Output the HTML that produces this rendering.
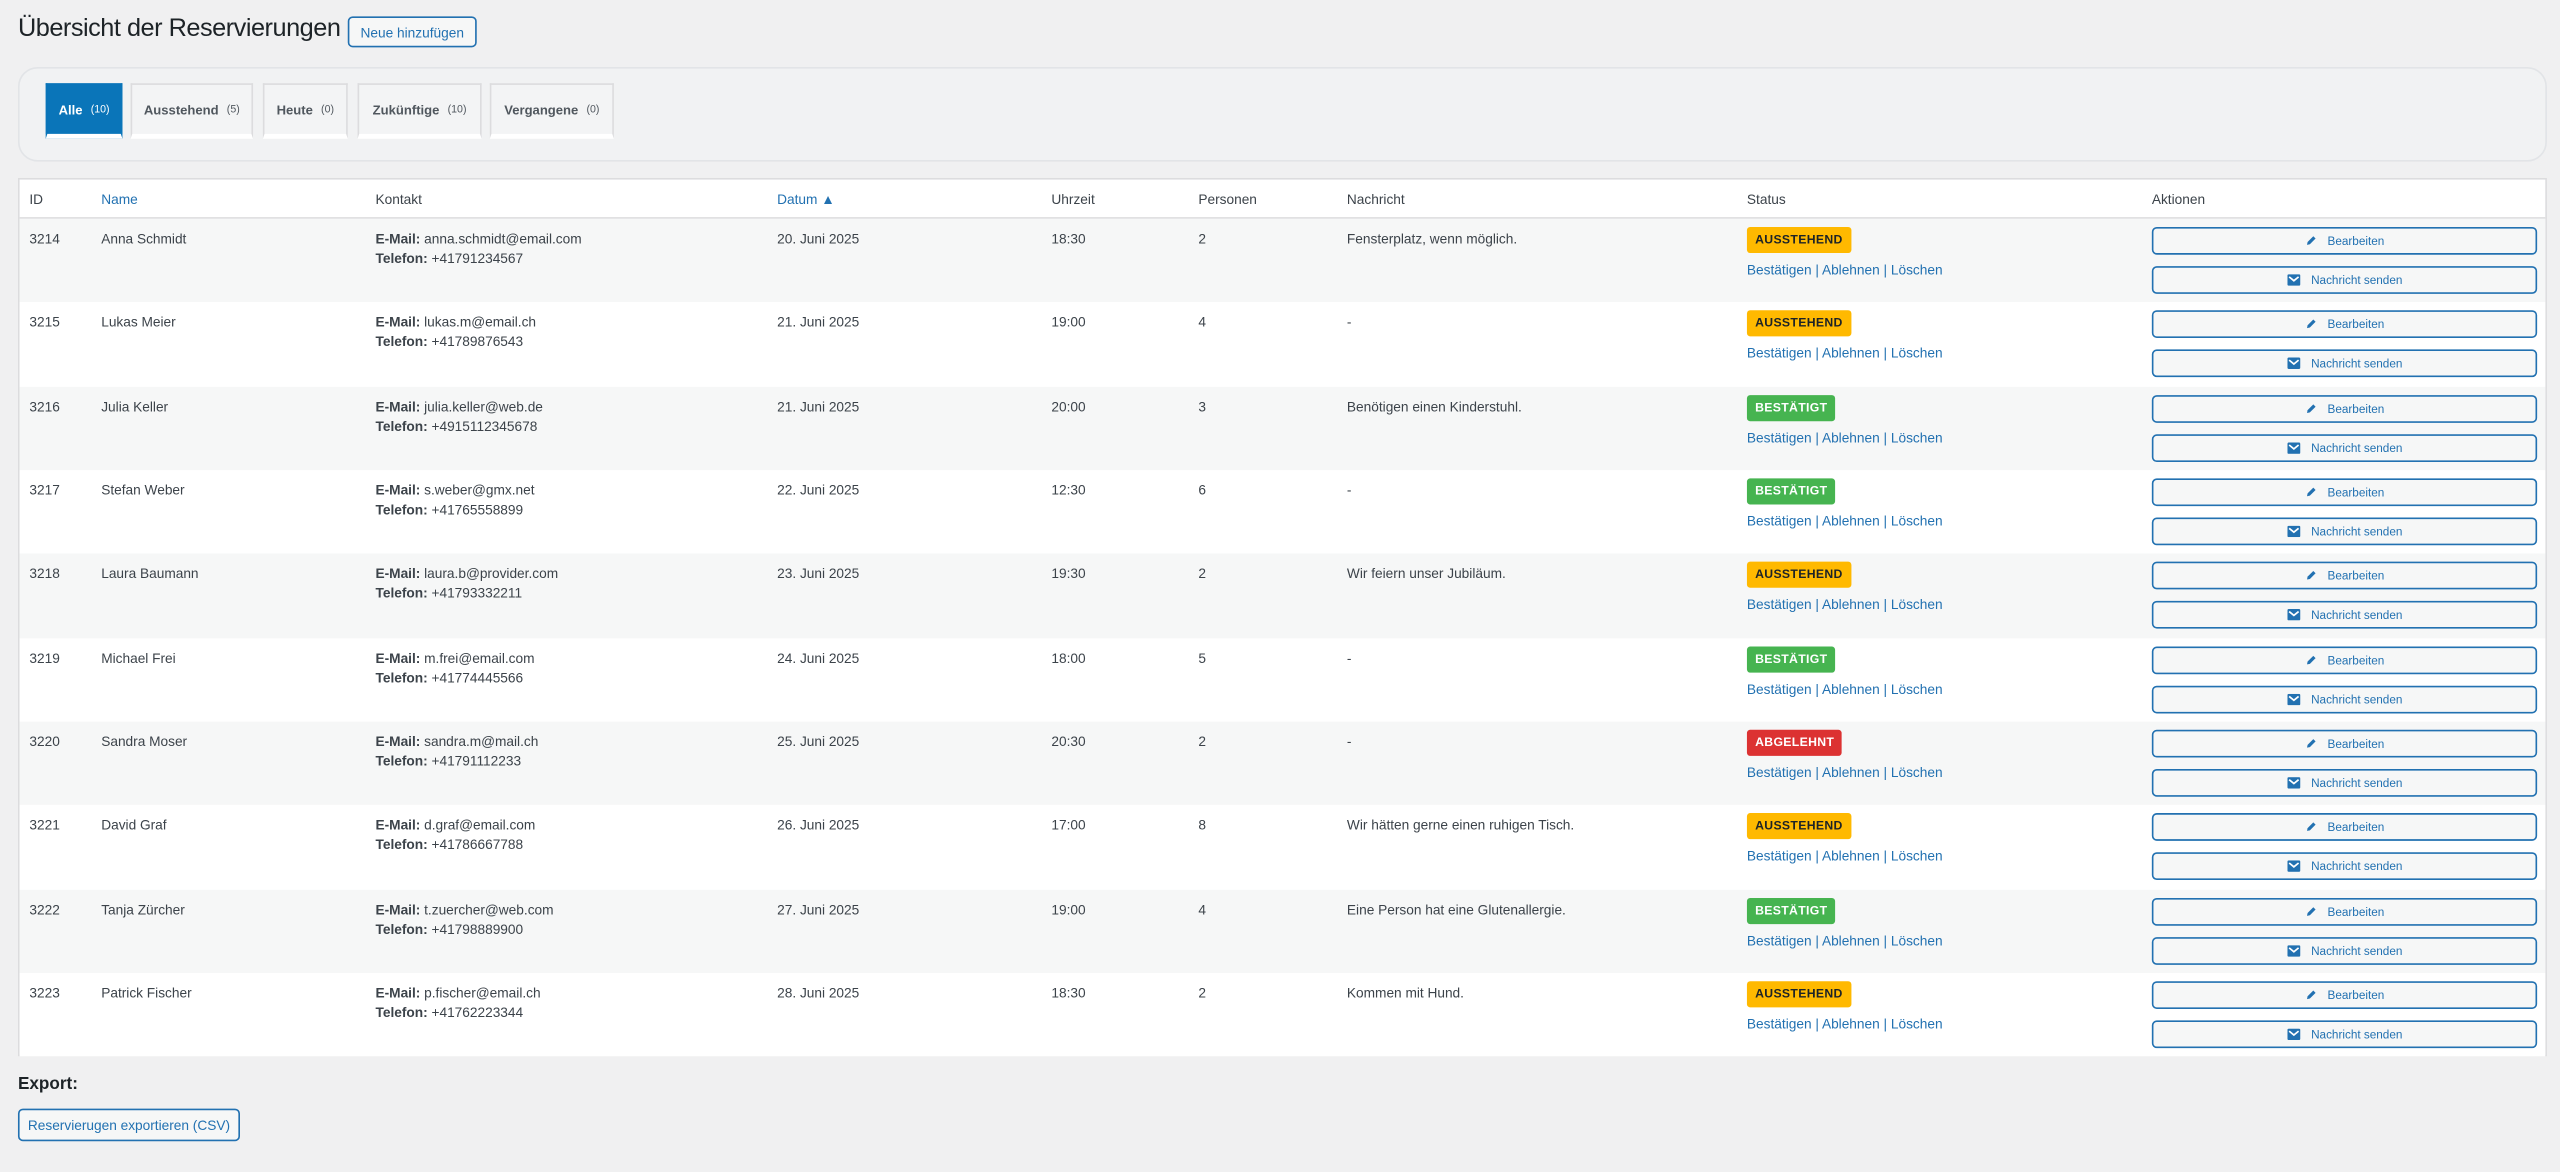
<!DOCTYPE html>
<html><head><meta charset="utf-8"><style>
html,body{margin:0;padding:0;background:#f0f0f1;overflow:hidden}
body{width:2560px;height:1172px}
#w{position:absolute;left:0;top:0;width:1568px;height:718px;transform:scale(1.63265);transform-origin:0 0;font-family:"Liberation Sans",sans-serif;color:#3c434a;font-size:8.4px}
.a{position:absolute;white-space:nowrap}
h1{position:absolute;left:11px;top:9px;margin:0;font-weight:400;font-size:15.5px;color:#1d2327;letter-spacing:-0.3px;white-space:nowrap}
.btn{position:absolute;border:1px solid #2271b1;border-radius:3px;color:#2271b1;background:#f6f7f7;font-size:8.4px;box-sizing:border-box;display:flex;align-items:center;justify-content:center;white-space:nowrap}
.panel{position:absolute;left:11px;top:41px;width:1549px;height:58px;border:1px solid #e2e4e7;border-radius:12px;box-sizing:border-box;background:#f1f2f3}
.tab{position:absolute;top:51px;height:34px;box-sizing:border-box;border:1px solid #dcdcde;border-bottom:3px solid #fff;background:#f3f4f5;font-weight:bold;font-size:8px;color:#50575e;display:flex;align-items:center;justify-content:center}
.tab small{font-weight:normal;font-size:6.5px;margin-left:5px}
.tab.on{background:#0a75b9;color:#fff;border-color:#0a75b9;border-bottom:3px solid #fff}
.tbl{position:absolute;left:11px;top:109px;width:1549px;height:538px;border:1px solid #dcdcde;box-sizing:border-box;background:#fff}
.row{position:absolute;left:12px;width:1547px;height:51.3px}
.badge{position:absolute;height:16px;line-height:16px;padding:0 5px;border-radius:2px;font-weight:bold;font-size:7.5px;letter-spacing:0.2px}
.ya{background:#ffb900;color:#1d2327}.gr{background:#46b450;color:#fff}.rd{background:#dc3232;color:#fff}
.lk{color:#2271b1}
.ab{position:absolute;left:1306px;width:236px;height:17px;border:1px solid #2271b1;border-radius:3px;box-sizing:border-box;background:#f6f7f7;color:#2271b1;font-size:7.2px;display:flex;align-items:center;justify-content:center;gap:7px}
</style></head><body><div id="w">
<h1>Übersicht der Reservierungen</h1>
<div class="btn" style="left:213px;top:10px;width:79px;height:19px">Neue hinzufügen</div>
<div class="panel"></div>
<div class="tab on" style="left:28px;width:47px">Alle<small>(10)</small></div>
<div class="tab" style="left:80px;width:75px">Ausstehend<small>(5)</small></div>
<div class="tab" style="left:161px;width:52px">Heute<small>(0)</small></div>
<div class="tab" style="left:219px;width:76px">Zukünftige<small>(10)</small></div>
<div class="tab" style="left:300px;width:76px">Vergangene<small>(0)</small></div>
<div class="tbl"></div>
<div class="a" style="top:117px;left:18px">ID</div>
<div class="a lk" style="top:117px;left:62px">Name</div>
<div class="a" style="top:117px;left:230px">Kontakt</div>
<div class="a lk" style="top:117px;left:476px">Datum ▲</div>
<div class="a" style="top:117px;left:644px">Uhrzeit</div>
<div class="a" style="top:117px;left:734px">Personen</div>
<div class="a" style="top:117px;left:825px">Nachricht</div>
<div class="a" style="top:117px;left:1070px">Status</div>
<div class="a" style="top:117px;left:1318px">Aktionen</div>
<div class="a" style="top:133px;left:12px;width:1547px;border-top:1px solid #dcdcde"></div>
<div id="rows"></div>
<div class="a" style="left:11px;top:658px;font-size:10.5px;font-weight:bold;color:#1d2327">Export:</div>
<div class="btn" style="left:11px;top:679px;width:136px;height:20px">Reservierugen exportieren (CSV)</div>
</div>
<script>
var d=[["3214","Anna Schmidt","anna.schmidt@email.com","+41791234567","20. Juni 2025","18:30","2","Fensterplatz, wenn möglich.","y"],
["3215","Lukas Meier","lukas.m@email.ch","+41789876543","21. Juni 2025","19:00","4","-","y"],
["3216","Julia Keller","julia.keller@web.de","+4915112345678","21. Juni 2025","20:00","3","Benötigen einen Kinderstuhl.","g"],
["3217","Stefan Weber","s.weber@gmx.net","+41765558899","22. Juni 2025","12:30","6","-","g"],
["3218","Laura Baumann","laura.b@provider.com","+41793332211","23. Juni 2025","19:30","2","Wir feiern unser Jubiläum.","y"],
["3219","Michael Frei","m.frei@email.com","+41774445566","24. Juni 2025","18:00","5","-","g"],
["3220","Sandra Moser","sandra.m@mail.ch","+41791112233","25. Juni 2025","20:30","2","-","r"],
["3221","David Graf","d.graf@email.com","+41786667788","26. Juni 2025","17:00","8","Wir hätten gerne einen ruhigen Tisch.","y"],
["3222","Tanja Zürcher","t.zuercher@web.com","+41798889900","27. Juni 2025","19:00","4","Eine Person hat eine Glutenallergie.","g"],
["3223","Patrick Fischer","p.fischer@email.ch","+41762223344","28. Juni 2025","18:30","2","Kommen mit Hund.","y"]];
var pen='<svg width="7" height="7" viewBox="0 0 10 10"><path d="M1.5 8.5 L2 6 L7 1 L9 3 L4 8 Z" fill="#2271b1"/></svg>';
var env='<svg width="8" height="7" viewBox="0 0 9 8"><rect width="9" height="8" rx="1" fill="#2271b1"/><path d="M1.2 1.8 L4.5 4.5 L7.8 1.8" stroke="#fff" stroke-width="1.2" fill="none"/></svg>';
var h='';
d.forEach(function(r,i){var t=134+i*51.35;
var bc=r[8]=="y"?"ya":r[8]=="g"?"gr":"rd",bt=r[8]=="y"?"AUSSTEHEND":r[8]=="g"?"BESTÄTIGT":"ABGELEHNT";
h+='<div class="row" style="top:'+t+'px;background:'+(i%2?'#fff':'#f6f7f7')+'"></div>';
var y=t+7;
h+='<div class="a" style="top:'+y+'px;left:18px">'+r[0]+'</div>';
h+='<div class="a" style="top:'+y+'px;left:62px">'+r[1]+'</div>';
h+='<div class="a" style="top:'+y+'px;left:230px"><b>E-Mail:</b> '+r[2]+'</div>';
h+='<div class="a" style="top:'+(y+12)+'px;left:230px"><b>Telefon:</b> '+r[3]+'</div>';
h+='<div class="a" style="top:'+y+'px;left:476px">'+r[4]+'</div>';
h+='<div class="a" style="top:'+y+'px;left:644px">'+r[5]+'</div>';
h+='<div class="a" style="top:'+y+'px;left:734px">'+r[6]+'</div>';
h+='<div class="a" style="top:'+y+'px;left:825px">'+r[7]+'</div>';
h+='<div class="badge '+bc+'" style="top:'+(t+5)+'px;left:1070px">'+bt+'</div>';
h+='<div class="a lk" style="top:'+(t+26)+'px;left:1070px">Bestätigen | Ablehnen | Löschen</div>';
h+='<div class="ab" style="top:'+(t+5)+'px;left:1318px">'+pen+'<span>Bearbeiten</span></div>';
h+='<div class="ab" style="top:'+(t+29)+'px;left:1318px">'+env+'<span>Nachricht senden</span></div>';
});
document.getElementById('rows').outerHTML=h;
</script>
</body></html>
